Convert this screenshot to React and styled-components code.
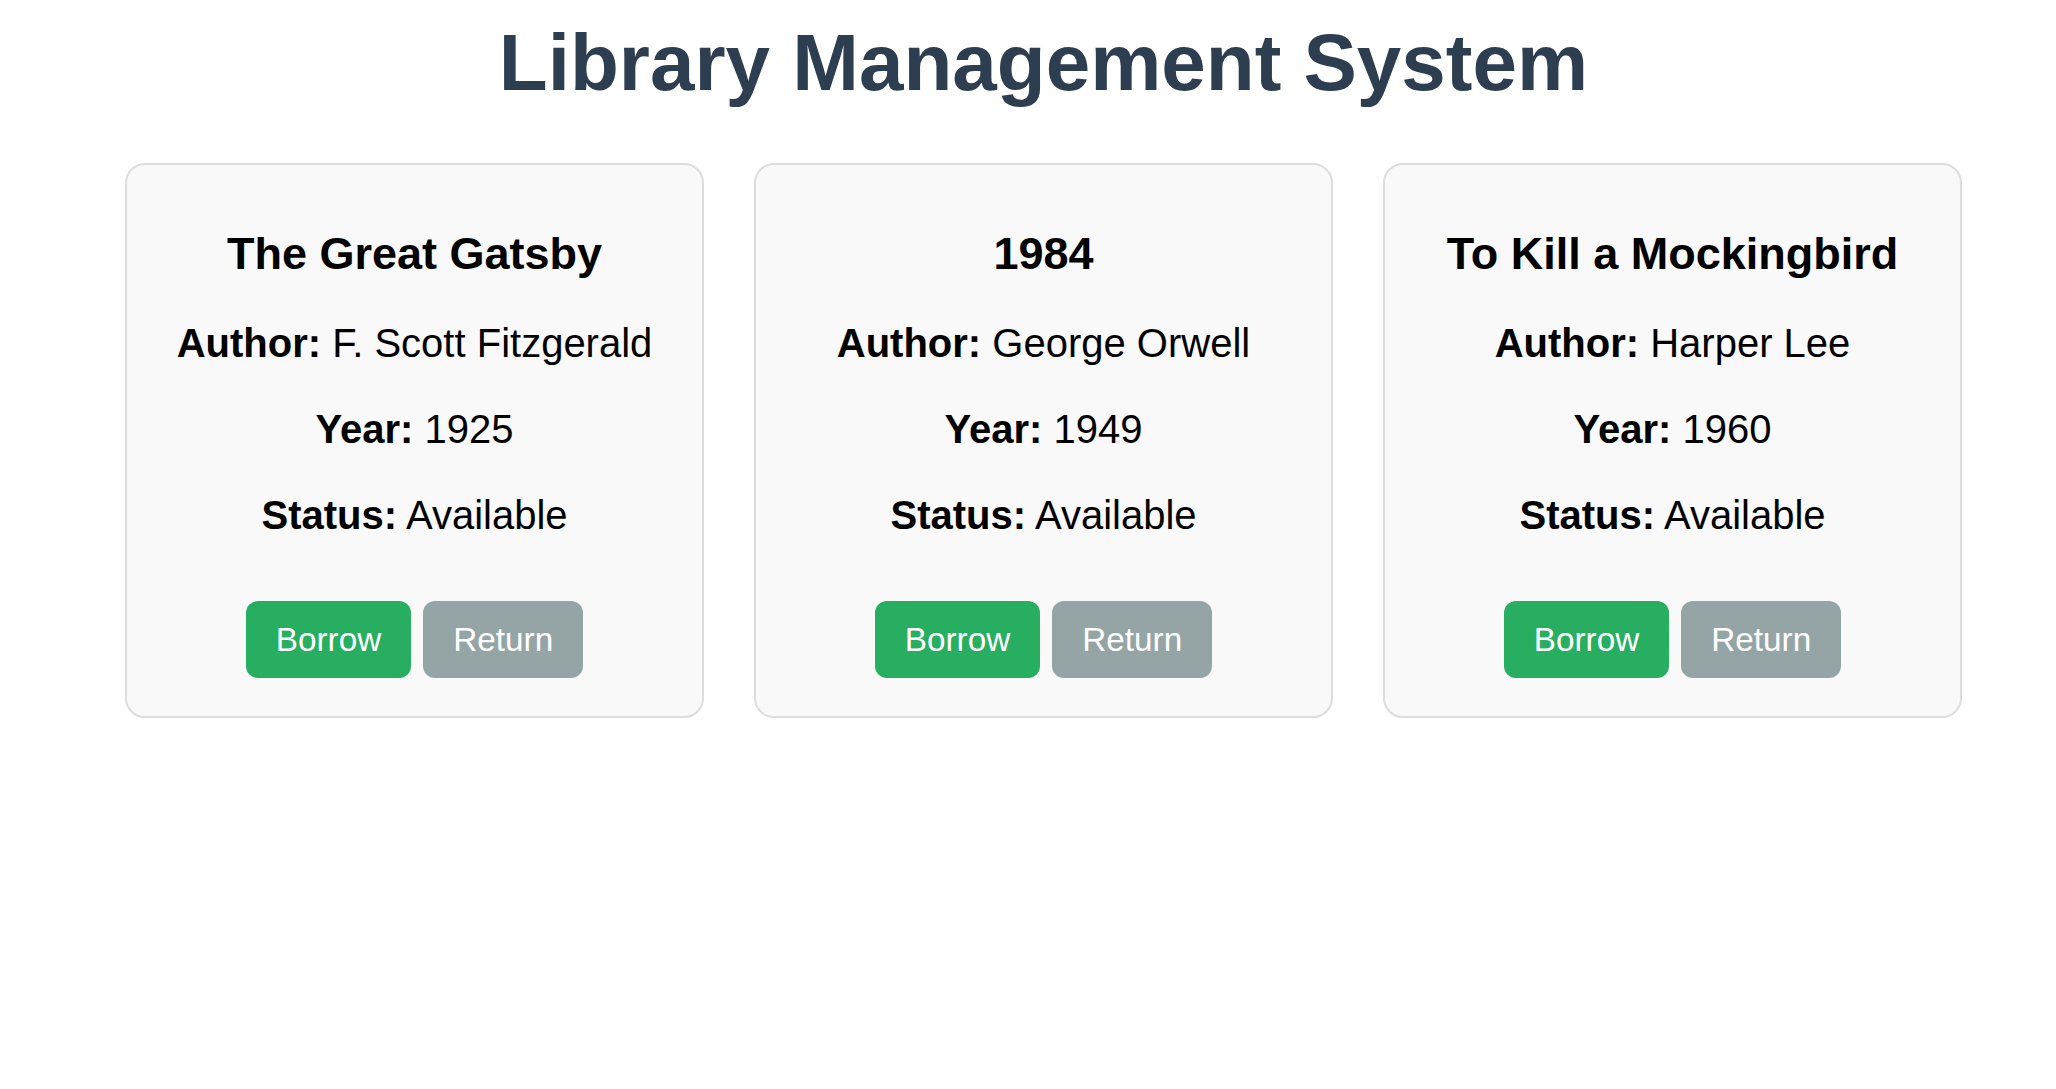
import React from "react";
import styled, { createGlobalStyle } from "styled-components";

const GlobalStyle = createGlobalStyle`
	body {
		margin: 0;
		background: #ffffff;
		font-family: "Liberation Sans", Arial, sans-serif;
	}
`;

const Page = styled.div`
	padding: 17px 0 0 31px;
	display: flex;
	flex-direction: column;
	align-items: center;
`;

const Title = styled.h1`
	margin: 0 0 54px;
	font-size: 80px;
	line-height: 92px;
	font-weight: bold;
	color: #2c3e50;
	text-align: center;
`;

const BookGrid = styled.div`
	display: grid;
	grid-template-columns: repeat(3, 579px);
	gap: 50px;
	justify-content: center;
`;

const Card = styled.section`
	box-sizing: border-box;
	background-color: #f9f9f9;
	border: 2px solid #dddddd;
	border-radius: 20px;
	padding: 63px 20px 38px;
	display: flex;
	flex-direction: column;
	align-items: center;
	text-align: center;
	color: #000000;
`;

const BookTitle = styled.h3`
	margin: 0 0 40px;
	font-size: 45px;
	line-height: 52px;
	font-weight: bold;
`;

const Detail = styled.p`
	margin: 0 0 40px;
	font-size: 40px;
	line-height: 46px;

	&:last-of-type {
		margin-bottom: 63px;
	}

	strong {
		font-weight: bold;
	}
`;

const Actions = styled.div`
	display: flex;
	justify-content: center;
	gap: 12px;
`;

const Button = styled.button`
	border: none;
	border-radius: 12px;
	padding: 0 30px;
	height: 77px;
	font-family: "Liberation Sans", Arial, sans-serif;
	font-size: 33.3px;
	color: #ffffff;
	background-color: ${(p) => (p.$variant === "borrow" ? "#27ae60" : "#95a5a6")};
	cursor: pointer;
`;

const books = [
	{ id: 1, title: "The Great Gatsby", author: "F. Scott Fitzgerald", year: 1925, status: "Available" },
	{ id: 2, title: "1984", author: "George Orwell", year: 1949, status: "Available" },
	{ id: 3, title: "To Kill a Mockingbird", author: "Harper Lee", year: 1960, status: "Available" },
];

function BookCard({ book }) {
	return (
		<Card>
			<BookTitle>{book.title}</BookTitle>
			<Detail>
				<strong>Author:</strong> {book.author}
			</Detail>
			<Detail>
				<strong>Year:</strong> {book.year}
			</Detail>
			<Detail>
				<strong>Status:</strong> {book.status}
			</Detail>
			<Actions>
				<Button $variant="borrow">Borrow</Button>
				<Button $variant="return">Return</Button>
			</Actions>
		</Card>
	);
}

export default function App() {
	return (
		<>
			<GlobalStyle />
			<Page>
				<Title>Library Management System</Title>
				<BookGrid>
					{books.map((b) => (
						<BookCard key={b.id} book={b} />
					))}
				</BookGrid>
			</Page>
		</>
	);
}
